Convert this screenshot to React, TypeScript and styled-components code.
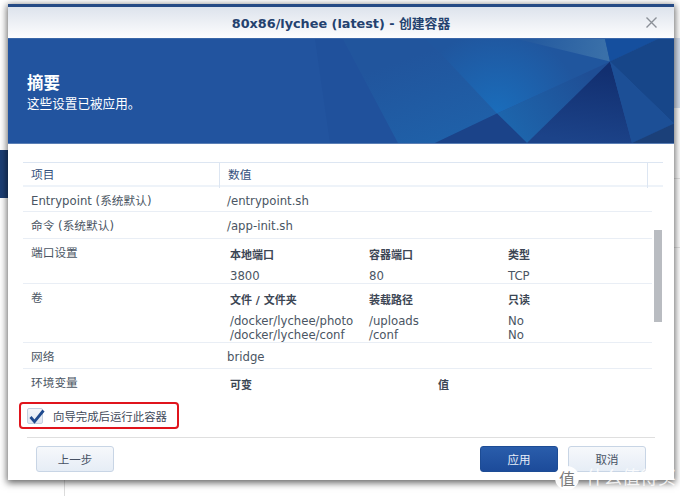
import React from 'react';
import styled, { createGlobalStyle } from 'styled-components';

const FONT = '"DejaVu Sans", "Noto Sans CJK SC", sans-serif';

const GlobalStyle = createGlobalStyle`
  html, body {
    margin: 0;
    padding: 0;
    background: #fff;
  }
`;

const Page = styled.div`
  position: relative;
  width: 680px;
  height: 496px;
  overflow: hidden;
  box-sizing: border-box;
  padding: 4px 6px 16px 8px;
  font-family: ${FONT};
  background:
    linear-gradient(#1d3f74, #1d3f74) 0 150px / 8px 48px no-repeat,
    linear-gradient(#d5dfee, #d5dfee) 674px 38px / 6px 70px no-repeat,
    linear-gradient(#e4e4e4, #e4e4e4) 674px 178px / 6px 1px no-repeat,
    linear-gradient(#e4e4e4, #e4e4e4) 674px 247px / 6px 1px no-repeat,
    linear-gradient(#dcdcdc, #dcdcdc) 64px 470px / 1px 26px no-repeat,
    #fff;
`;

const Dialog = styled.div`
  height: 100%;
  display: flex;
  flex-direction: column;
  background: #fff;
  box-shadow: 0 2px 7px 1px rgba(0, 0, 0, 0.6);
`;

const TitleBar = styled.div`
  height: 31px;
  flex: none;
  display: flex;
  align-items: center;
  justify-content: center;
  position: relative;
  border-top: 3px solid #254a85;
  background: linear-gradient(#dde3ec, #fdfdfe);
`;

const Title = styled.div`
  font-size: 12.8px;
  font-weight: 700;
  color: #24426f;
`;

const CloseIcon = styled.svg`
  position: absolute;
  right: 16px;
  top: 9px;
  width: 13px;
  height: 13px;
`;

const Banner = styled.div`
  height: 106px;
  flex: none;
  position: relative;
  box-sizing: border-box;
  padding: 35px 19px 0;
  background: #22559f;
  color: #fff;
  border-top: 1px solid #3a66a8;
  border-bottom: 1px solid #5b7fb5;
`;

const BannerArt = styled.svg`
  position: absolute;
  left: 0;
  top: 0;
  width: 100%;
  height: 100%;
`;

const BannerTitle = styled.div`
  position: relative;
  font-size: 16.5px;
  font-weight: 700;
  line-height: 20px;
`;

const BannerText = styled.div`
  position: relative;
  font-size: 12.6px;
  line-height: 20px;
`;

const Body = styled.div`
  flex: 1;
  min-height: 0;
  display: flex;
  flex-direction: column;
  padding: 18px 11px 0 15px;
`;

const TableHead = styled.div`
  height: 25px;
  flex: none;
  display: grid;
  grid-template-columns: 197px 428px 1fr;
  border-top: 1px solid #dde6f2;
  border-bottom: 2px solid #eef3f9;
  box-sizing: border-box;
`;

const HeadCell = styled.div`
  font-size: 11.7px;
  line-height: 25px;
  padding-left: 8px;
  color: #34507c;
  border-right: 1px solid #dde6f2;

  &:last-child {
    border-right: 0;
  }
`;

const ScrollArea = styled.div`
  height: 215px;
  flex: none;
  display: flex;
  gap: 2px;
  overflow: hidden;
`;

const Rows = styled.div`
  width: 629px;
  flex: none;
`;

const Row = styled.div<{ $height: number }>`
  height: ${(p) => p.$height}px;
  box-sizing: border-box;
  display: grid;
  grid-template-columns: 196px 1fr;
  border-bottom: 1px solid #e9eef5;

  &:last-child {
    border-bottom: 0;
  }
`;

const Label = styled.div`
  font-size: 11.7px;
  line-height: 16px;
  padding: 6px 0 0 8px;
  color: #4a5563;
`;

const Value = styled.div`
  font-size: 11.7px;
  line-height: 16px;
  padding: 6px 0 0 8px;
  color: #4a5563;
`;

const Nested = styled.div<{ $columns: string }>`
  display: grid;
  grid-template-columns: ${(p) => p.$columns};
  padding: 8px 0 0 11px;
`;

const NestedHead = styled.div`
  font-size: 11px;
  font-weight: 700;
  line-height: 17px;
  color: #3c4654;
  margin-bottom: 4px;
`;

const NestedValue = styled.div`
  font-size: 11.7px;
  line-height: 14px;
  color: #4a5563;
  white-space: pre-line;
`;

const ScrollThumb = styled.div`
  width: 8px;
  height: 92px;
  margin-top: 43px;
  flex: none;
  background: #b9bcc1;
`;

const CheckRow = styled.div`
  align-self: flex-start;
  box-sizing: border-box;
  width: 160px;
  height: 27px;
  margin-left: -4px;
  flex: none;
  display: flex;
  align-items: center;
  gap: 10px;
  padding-left: 6px;
  border: 2px solid #e0141c;
  border-radius: 4px;
`;

const CheckBox = styled.div`
  width: 16px;
  height: 16px;
  flex: none;
  box-sizing: border-box;
  position: relative;
  background: linear-gradient(#f3f6fa, #dfe7f2);
  border: 1px solid #c4d0e0;
  border-radius: 2px;
`;

const CheckMark = styled.svg`
  position: absolute;
  left: 0;
  top: -1px;
  width: 18px;
  height: 17px;
`;

const CheckLabel = styled.span`
  font-size: 11.4px;
  color: #3f4a5a;
  white-space: nowrap;
`;

const Footer = styled.div`
  margin: 8px 8px 0 4px;
  padding: 8px 9px 0;
  border-top: 1px solid #dfdfdf;
  display: flex;
  align-items: center;
`;

const Button = styled.div<{ $primary?: boolean }>`
  width: 78px;
  height: 26px;
  box-sizing: border-box;
  display: flex;
  align-items: center;
  justify-content: center;
  font-size: 11.5px;
  border-radius: 3px;
  color: ${(p) => (p.$primary ? '#e8eef8' : '#465163')};
  border: 1px solid ${(p) => (p.$primary ? '#1d4c95' : '#c8d5e5')};
  background: ${(p) =>
    p.$primary
      ? 'linear-gradient(#2a5dab, #1c4b9a)'
      : 'linear-gradient(#f6f8fb, #e6edf6)'};
`;

const FooterGap = styled.div<{ $width?: number }>`
  flex: ${(p) => (p.$width ? 'none' : 1)};
  width: ${(p) => p.$width ?? 0}px;
`;

const Watermark = styled.div`
  position: absolute;
  left: 555px;
  top: 466px;
  display: flex;
  align-items: center;
  gap: 7px;
`;

const WatermarkBadge = styled.div`
  width: 24px;
  height: 24px;
  border-radius: 50%;
  background: rgba(255, 255, 255, 0.94);
  display: flex;
  align-items: center;
  justify-content: center;
  font-size: 16px;
  color: #7b7b7b;
`;

const WatermarkText = styled.div`
  font-size: 18px;
  line-height: 24px;
  white-space: nowrap;
  color: rgba(255, 255, 255, 0.82);
`;

const BannerPolygons = () => (
  <BannerArt viewBox="8 38 666 106" preserveAspectRatio="none">
    <defs>
      <linearGradient id="mid" gradientUnits="userSpaceOnUse" x1="400" y1="60" x2="430" y2="144">
        <stop offset="0" stopColor="#21559d" />
        <stop offset="1" stopColor="#1f60a8" />
      </linearGradient>
      <radialGradient id="glow" gradientUnits="userSpaceOnUse" cx="497" cy="114" r="85">
        <stop offset="0" stopColor="#1a6dbb" />
        <stop offset="1" stopColor="#20569e" />
      </radialGradient>
      <linearGradient id="light" gradientUnits="userSpaceOnUse" x1="530" y1="38" x2="605" y2="50">
        <stop offset="0" stopColor="#245a9f" />
        <stop offset="1" stopColor="#3a70a9" />
      </linearGradient>
      <linearGradient id="deep" gradientUnits="userSpaceOnUse" x1="600" y1="70" x2="590" y2="144">
        <stop offset="0" stopColor="#122f70" />
        <stop offset="1" stopColor="#1c4389" />
      </linearGradient>
      <linearGradient id="fan" gradientUnits="userSpaceOnUse" x1="590" y1="75" x2="510" y2="135">
        <stop offset="0" stopColor="#1f4e95" />
        <stop offset="1" stopColor="#1d66ad" />
      </linearGradient>
    </defs>
    <polygon points="343,38 398,144 8,144 8,38" fill="#22549f" />
    <polygon points="343,38 398,144 330,144 315,38" fill="#20519c" />
    <polygon points="343,38 430,38 497,114 435,144 398,144" fill="url(#mid)" />
    <polygon points="425,38 517,38 610,61 497,114 440,52" fill="url(#glow)" />
    <polygon points="517,38 605,38 610,61" fill="url(#light)" />
    <polygon points="605,38 658,38 610,61" fill="#154f9e" />
    <polygon points="658,38 674,38 674,124 610,61" fill="#174689" />
    <polygon points="610,61 497,114 527,144" fill="url(#fan)" />
    <polygon points="497,114 435,144 527,144" fill="#1b4389" />
    <polygon points="610,61 527,144 632,144" fill="url(#deep)" />
    <polygon points="610,61 632,144 674,124" fill="#1c4f96" />
    <polygon points="632,144 674,144 674,124" fill="#1b4079" />
  </BannerArt>
);

const App: React.FC = () => (
  <Page>
    <GlobalStyle />
    <Dialog>
      <TitleBar>
        <Title>80x86/lychee (latest) - 创建容器</Title>
        <CloseIcon viewBox="0 0 13 13">
          <path d="M1.5 1.5l10 10M11.5 1.5l-10 10" stroke="#8b9097" strokeWidth="1.4" fill="none" />
        </CloseIcon>
      </TitleBar>
      <Banner>
        <BannerPolygons />
        <BannerTitle>摘要</BannerTitle>
        <BannerText>这些设置已被应用。</BannerText>
      </Banner>
      <Body>
        <TableHead>
          <HeadCell>项目</HeadCell>
          <HeadCell>数值</HeadCell>
          <HeadCell />
        </TableHead>
        <ScrollArea>
          <Rows>
            <Row $height={25}>
              <Label>Entrypoint (系统默认)</Label>
              <Value>/entrypoint.sh</Value>
            </Row>
            <Row $height={27}>
              <Label>命令 (系统默认)</Label>
              <Value>/app-init.sh</Value>
            </Row>
            <Row $height={45}>
              <Label>端口设置</Label>
              <Nested $columns="139px 139px 1fr">
                <NestedHead>本地端口</NestedHead>
                <NestedHead>容器端口</NestedHead>
                <NestedHead>类型</NestedHead>
                <NestedValue>3800</NestedValue>
                <NestedValue>80</NestedValue>
                <NestedValue>TCP</NestedValue>
              </Nested>
            </Row>
            <Row $height={59}>
              <Label>卷</Label>
              <Nested $columns="139px 139px 1fr">
                <NestedHead>文件 / 文件夹</NestedHead>
                <NestedHead>装载路径</NestedHead>
                <NestedHead>只读</NestedHead>
                <NestedValue>{'/docker/lychee/photo\n/docker/lychee/conf'}</NestedValue>
                <NestedValue>{'/uploads\n/conf'}</NestedValue>
                <NestedValue>{'No\nNo'}</NestedValue>
              </Nested>
            </Row>
            <Row $height={26}>
              <Label>网络</Label>
              <Value>bridge</Value>
            </Row>
            <Row $height={33}>
              <Label>环境变量</Label>
              <Nested $columns="208px 1fr">
                <NestedHead>可变</NestedHead>
                <NestedHead>值</NestedHead>
              </Nested>
            </Row>
          </Rows>
          <ScrollThumb />
        </ScrollArea>
        <CheckRow>
          <CheckBox>
            <CheckMark viewBox="0 0 18 17">
              <path d="M2.5 9l4 4.6L15.5 2.5" stroke="#1f4a8e" strokeWidth="2.8" fill="none" />
            </CheckMark>
          </CheckBox>
          <CheckLabel>向导完成后运行此容器</CheckLabel>
        </CheckRow>
        <Footer>
          <Button>上一步</Button>
          <FooterGap />
          <Button $primary>应用</Button>
          <FooterGap $width={10} />
          <Button>取消</Button>
        </Footer>
      </Body>
    </Dialog>
    <Watermark>
      <WatermarkBadge>值</WatermarkBadge>
      <WatermarkText>什么值得买</WatermarkText>
    </Watermark>
  </Page>
);

export default App;
